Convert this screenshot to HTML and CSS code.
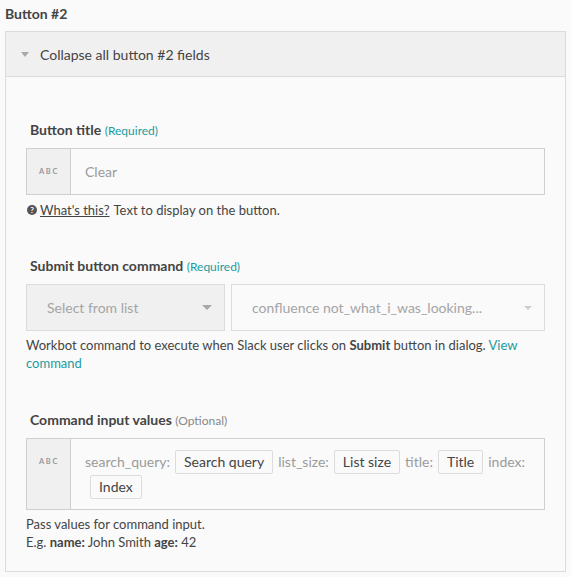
FILE: index.html
```html
<!DOCTYPE html>
<html>
<head>
<meta charset="utf-8">
<link rel="stylesheet" href="styles.css">
</head>
<body>
<div class="page">
  <div class="section-title">Button #2</div>
  <div class="panel">
    <div class="panel-header">
      <span class="caret"></span>
      <span class="header-text">Collapse all button #2 fields</span>
    </div>
    <div class="panel-body">
      <div class="field field-first">
        <div class="label">Button title <span class="req">(Required)</span></div>
        <div class="input">
          <div class="prefix"><span class="abc">ABC</span></div>
          <div class="input-value">Clear</div>
        </div>
        <div class="help"><span class="qicon">?</span><span class="whats">What's this?</span> Text to display on the button.</div>
      </div>

      <div class="field field-second">
        <div class="label">Submit button command <span class="req">(Required)</span></div>
        <div class="selects">
          <div class="select select-list"><span>Select from list</span><span class="sel-caret"></span></div>
          <div class="select select-cmd"><span>confluence not_what_i_was_looking...</span><span class="sel-caret light"></span></div>
        </div>
        <p class="help help-block">Workbot command to execute when Slack user clicks on <strong>Submit</strong> button in dialog. <a class="link">View command</a></p>
      </div>

      <div class="field field-third">
        <div class="label">Command input values <span class="opt">(Optional)</span></div>
        <div class="input input-tall">
          <div class="prefix prefix-top"><span class="abc">ABC</span></div>
          <div class="pills">
            <span class="key">search_query:</span><span class="pill">Search query</span>
            <span class="key">list_size:</span><span class="pill">List size</span>
            <span class="key">title:</span><span class="pill">Title</span>
            <span class="key">index:</span><span class="pill pill-wrap">Index</span>
          </div>
        </div>
        <p class="help help-block">Pass values for command input.<br>E.g. <strong>name:</strong> John Smith <strong>age:</strong> 42</p>
      </div>
    </div>
  </div>
</div>
</body>
</html>
```

FILE: styles.css
```css
* { box-sizing: border-box; }
html, body { margin: 0; padding: 0; background: #fafafa; }
body {
  font-family: Lato, "Open Sans", sans-serif;
  color: #444;
  width: 571px;
  height: 577px;
  overflow: hidden;
}
.page { padding: 5px 5px 0 5px; }
.section-title {
  font-weight: bold;
  font-size: 14px;
  color: #444;
  line-height: 17px;
  height: 26px;
}
.panel {
  border: 1px solid #dcdcdc;
  background: #fafafa;
  width: 561px;
  height: 541px;
}
.panel-header {
  height: 45px;
  background: #f0f0f0;
  border-bottom: 1px solid #dcdcdc;
  display: flex;
  align-items: center;
  padding-left: 15px;
}
.caret {
  width: 0; height: 0;
  border-left: 4.5px solid transparent;
  border-right: 4.5px solid transparent;
  border-top: 5px solid #a8a8a8;
  margin-right: 11px;
}
.header-text { font-size: 14px; color: #444; }
.panel-body { padding: 0 20px; }
.field-first { padding-top: 44px; }
.field-second { padding-top: 38px; }
.field-third { padding-top: 39px; }
.label {
  font-weight: bold;
  font-size: 14px;
  color: #444;
  line-height: 17px;
  margin-left: 4px;
  margin-bottom: 9px;
}
.req { font-weight: normal; font-size: 12px; color: #1a9aa0; }
.opt { font-weight: normal; font-size: 12px; color: #888; }
.input {
  display: flex;
  height: 47px;
  border: 1px solid #cfcfcf;
  background: #fafafa;
}
.prefix {
  width: 44px;
  flex: none;
  background: #f0f0f0;
  border-right: 1px solid #cfcfcf;
  display: flex;
  align-items: center;
  justify-content: center;
}
.abc {
  font-size: 7.5px;
  letter-spacing: 1.6px;
  font-weight: bold;
  color: #999;
  margin-left: 1px;
}
.input-value {
  font-size: 14px;
  color: #9a9a9a;
  display: flex;
  align-items: center;
  padding-left: 14px;
}
.help {
  font-size: 13px;
  color: #444;
  line-height: 18px;
  margin: 6px 0 0 0;
  display: flex;
  align-items: center;
}
.qicon {
  width: 10px; height: 10px;
  border-radius: 50%;
  background: #555;
  color: #fafafa;
  font-size: 8px;
  font-weight: bold;
  display: inline-flex;
  align-items: center;
  justify-content: center;
  margin-right: 3px;
  margin-left: 1px;
}
.whats { text-decoration: underline; margin-right: 4px; }
.help-block { display: block; margin-top: 5px; }
.help-block strong { font-weight: bold; }
.link { color: #1a9aa0; text-decoration: none; }
.selects { display: flex; gap: 6px; }
.select {
  height: 47px;
  border: 1px solid #dcdcdc;
  display: flex;
  align-items: center;
  justify-content: space-between;
  font-size: 14px;
  color: #a5a5a5;
}
.select-list {
  width: 199px;
  background: #f0f0f0;
  padding: 0 12px 0 20px;
}
.select-cmd {
  flex: 1;
  background: #fafafa;
  padding: 0 12px 0 20px;
}
.sel-caret {
  width: 0; height: 0;
  border-left: 5px solid transparent;
  border-right: 5px solid transparent;
  border-top: 5px solid #a8a8a8;
}
.sel-caret.light { border-top-color: #cccccc; border-left-width: 4px; border-right-width: 4px; border-top-width: 4px; }
.input-tall { height: 72px; }
.prefix-top { align-items: flex-start; padding-top: 18px; }
.pills {
  flex: 1;
  padding: 11px 2px 0 14px;
  font-size: 14px;
  line-height: 24px;
  display: flex;
  flex-wrap: wrap;
  align-content: flex-start;
  row-gap: 1px;
}
.key { color: #9a9a9a; margin-right: 5px; }
.pill {
  border: 1px solid #dcdcdc;
  background: #fafafa;
  color: #444;
  padding: 0 8px;
  height: 24px;
  line-height: 22px;
  margin-right: 5px;
  border-radius: 2px;
}
.pill-wrap { margin-left: 5px; }
```
